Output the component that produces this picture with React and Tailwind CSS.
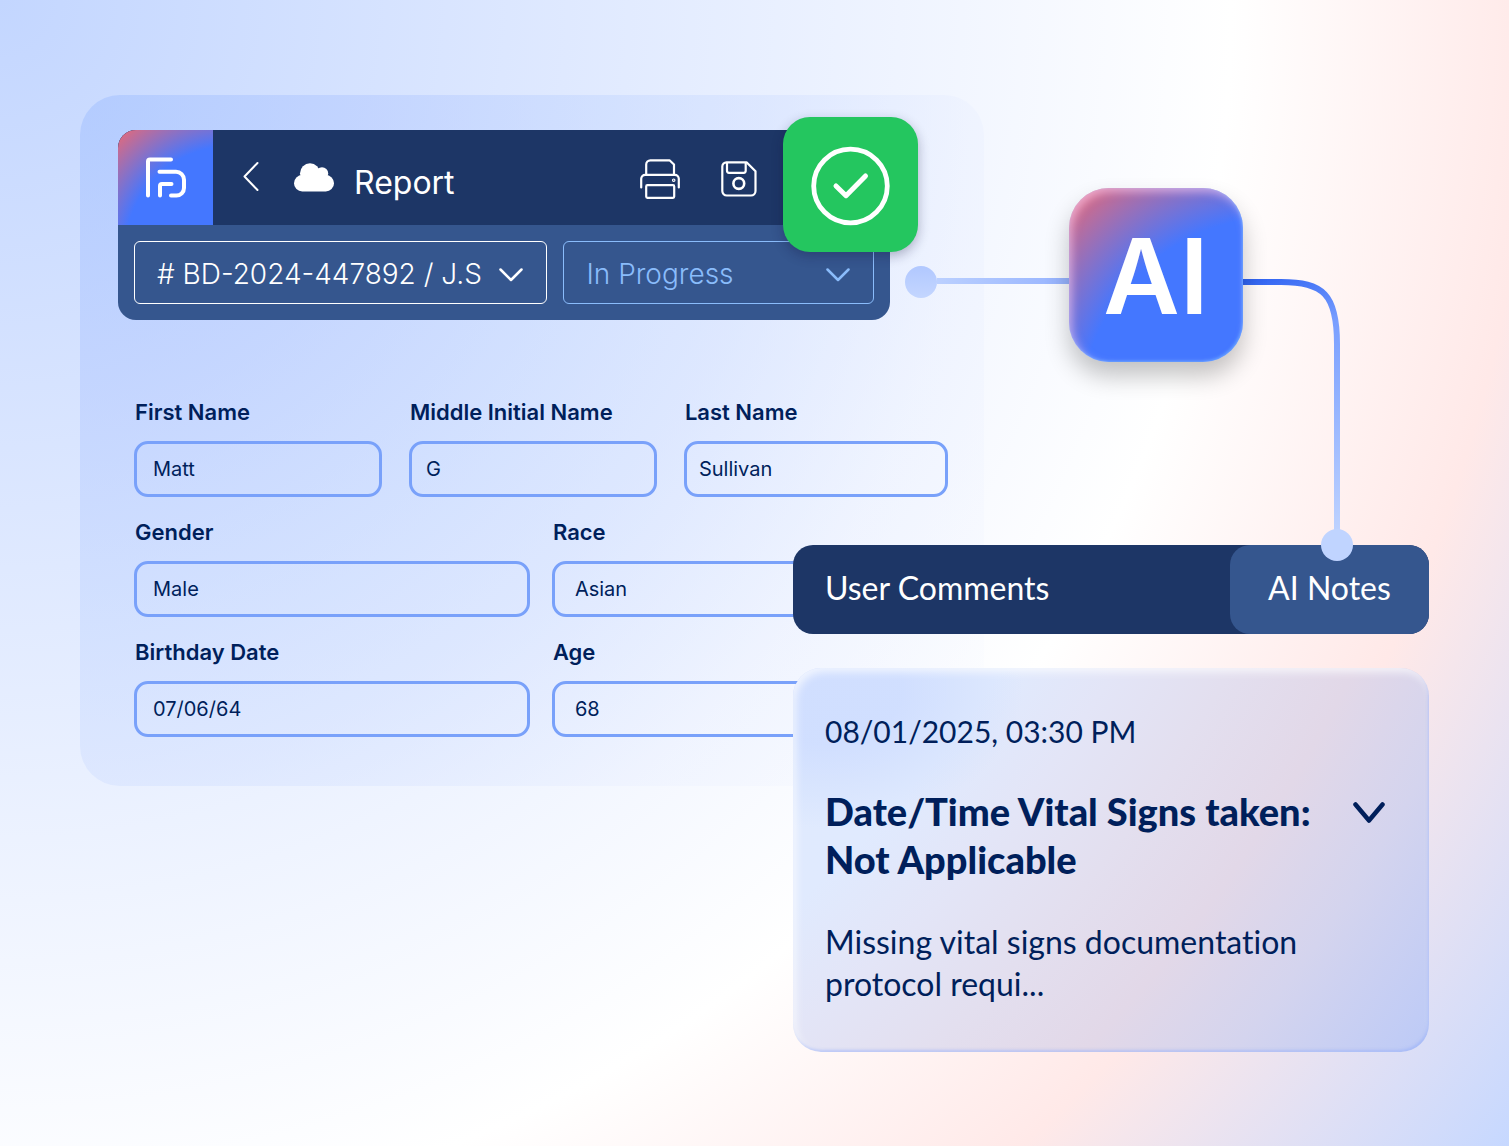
import React from "react";

function Chevron({ className, strokeWidth = 2 }) {
  return (
    <svg viewBox="0 0 24 14" fill="none" stroke="currentColor" strokeWidth={strokeWidth} strokeLinecap="round" strokeLinejoin="round" className={className} aria-hidden="true">
      <path d="M1.500 1.500 12 12 22.500 1.500" />
    </svg>
  );
}

function LogoMark() {
  return (
    <svg viewBox="0 0 95 95" fill="none" stroke="white" strokeWidth="4" strokeLinecap="round" strokeLinejoin="round" className="size-full" aria-hidden="true">
      <path d="M30 65.500V31.500a2 2 0 0 1 2-2H53" />
      <path d="M41.500 41.700H58a8 8 0 0 1 8 8V58a7.600 7.600 0 0 1-7.600 7.600H53" />
      <path d="M42 65.500V56a2 2 0 0 1 2-2H53.500" />
    </svg>
  );
}

function CloudIcon() {
  return (
    <svg viewBox="0 0 40 29" fill="white" className="h-[29px] w-10" aria-hidden="true">
      <rect x="0" y="12" width="40" height="16.500" rx="8.250" />
      <circle cx="16" cy="10.300" r="10" />
      <circle cx="28" cy="10.500" r="6.200" />
      <rect x="7" y="9" width="26" height="9" rx="3" />
    </svg>
  );
}

function PrinterIcon() {
  return (
    <svg viewBox="0 0 40 40" fill="none" stroke="white" strokeWidth="2.200" strokeLinecap="round" strokeLinejoin="round" className="size-10" aria-hidden="true">
      <path d="M6.200 15.800V5.500a4.200 4.200 0 0 1 4.200-4.200H29.500L34 5.500V15.800" />
      <path d="M1.200 28.500V19.800a4 4 0 0 1 4-4H34.800a4 4 0 0 1 4 4V28.500" />
      <rect x="6.200" y="26.200" width="28" height="12.600" rx="1.200" />
      <circle cx="33.700" cy="21.200" r="1.200" strokeWidth="1.200" />
    </svg>
  );
}

function SaveIcon() {
  return (
    <svg viewBox="0 0 36 36" fill="none" stroke="white" strokeWidth="2.200" strokeLinejoin="round" className="size-9" aria-hidden="true">
      <path d="M5.500 1.300H25.500L34.500 10.300V30a4.500 4.500 0 0 1-4.500 4.500H5.800a4.500 4.500 0 0 1-4.500-4.500V5.500a4.200 4.200 0 0 1 4.200-4.200Z" />
      <path d="M6 1.500V9.800a2 2 0 0 0 2 2H22.700a2 2 0 0 0 2-2V1.500" />
      <circle cx="17.800" cy="22.500" r="5.400" strokeWidth="2.600" />
    </svg>
  );
}

function HeaderSelect({ label, value, tone }) {
  return (
    <div className={`relative ${tone}`}>
      <select aria-label={label} defaultValue={value} className="h-[63px] w-full appearance-none rounded-md border border-current bg-transparent pt-0.5 pl-[22px] pr-12 text-[28px] font-light outline-none">
        <option>{value}</option>
      </select>
      <Chevron strokeWidth={2.5} className="pointer-events-none absolute right-6 top-[27px] h-[14px] w-6" />
    </div>
  );
}

function Field({ id, label, value, pad = "pl-4" }) {
  return (
    <div>
      <label htmlFor={id} className="block pl-px text-[22px] leading-8 font-semibold">
        {label}
      </label>
      <input id={id} defaultValue={value} className={`mt-[13px] block h-14 w-full rounded-[14px] border-[3px] border-[#79a1fa] bg-transparent text-xl outline-none ${pad}`} />
    </div>
  );
}

function ReportHeader() {
  return (
    <header className="relative mr-[94px] ml-[38px] font-[Inter,sans-serif] text-white">
      <div className="overflow-hidden rounded-[18px] bg-[#35568e]">
        <div className="flex h-[95px] items-center bg-[#1d3666]">
          <div className="size-[95px] bg-[radial-gradient(circle_at_120%_130%,#4477ff_0%,#4477ff_64%,#dc6a80_97%)]">
            <LogoMark />
          </div>
          <button aria-label="Back" className="ml-[30px] mb-1">
            <svg viewBox="0 0 16 30" fill="none" stroke="white" strokeWidth="2" strokeLinecap="round" strokeLinejoin="round" className="h-[30px] w-4" aria-hidden="true">
              <path d="M14.500 2 1.500 15.500 14.500 29" />
            </svg>
          </button>
          <div className="ml-[35px]">
            <CloudIcon />
          </div>
          <h1 className="mt-2.5 ml-5 text-[32px]">Report</h1>
          <div className="mt-0.5 mr-[133px] ml-auto flex items-center gap-[41px]">
            <button aria-label="Print"><PrinterIcon /></button>
            <button aria-label="Save"><SaveIcon /></button>
          </div>
        </div>
        <div className="grid grid-cols-[413fr_310fr] gap-4 p-4">
          <HeaderSelect label="Report number" value="# BD-2024-447892 / J.S" tone="text-white" />
          <HeaderSelect label="Status" value="In Progress" tone="text-[#8abcfb]" />
        </div>
      </div>
      <div className="absolute -top-[13px] -right-7 size-[135px] rounded-[27px] bg-[#24c65f] shadow-[0_4px_12px_rgba(20,20,60,0.3)]">
        <svg viewBox="0 0 135 135" fill="none" stroke="white" strokeLinecap="round" strokeLinejoin="round" className="size-full" aria-label="Complete">
          <circle cx="67.500" cy="69" r="36.800" strokeWidth="4.800" />
          <path d="M53 69 63 78.700 82.500 59" strokeWidth="5" />
        </svg>
      </div>
    </header>
  );
}

function ReportPanel() {
  return (
    <section className="col-start-1 row-start-1 w-[67%] self-start rounded-[40px] bg-[radial-gradient(circle_at_0_0,rgba(150,184,255,0.42)_0%,rgba(165,190,255,0.38)_25%,rgba(180,204,255,0.34)_45%,rgba(198,215,255,0.34)_60%,rgba(228,235,255,0.28)_78%,rgba(255,255,255,0.1)_100%)] pt-[35px] pb-[49px]">
      <ReportHeader />
      <form className="mt-[76px] mr-9 ml-[54px] flex flex-col gap-[19px] font-[Inter,sans-serif] text-[#001f5b]">
        <div className="grid grid-cols-[248fr_248fr_264fr] gap-[27px]">
          <Field id="first" label="First Name" value="Matt" />
          <Field id="middle" label="Middle Initial Name" value="G" pad="pl-[14px]" />
          <Field id="last" label="Last Name" value="Sullivan" pad="pl-3" />
        </div>
        <div className="grid grid-cols-2 gap-[22px]">
          <Field id="gender" label="Gender" value="Male" />
          <Field id="race" label="Race" value="Asian" pad="pl-5" />
        </div>
        <div className="grid grid-cols-2 gap-[22px]">
          <Field id="birthday" label="Birthday Date" value="07/06/64" />
          <Field id="age" label="Age" value="68" pad="pl-5" />
        </div>
      </form>
    </section>
  );
}

function AiConnector() {
  return (
    <div className="absolute top-[188px] right-[156px] left-[60%] flex items-start">
      <div className="mt-[78px] size-8 shrink-0 rounded-full bg-linear-to-b from-[#b1c8ff] to-[#c4d6ff]" />
      <div className="mt-[90px] h-[6px] grow bg-linear-to-r from-[#bbd0ff] to-[#96b3ff]" />
      <div className="z-10 flex size-[174px] shrink-0 items-center justify-center rounded-[40px] bg-[radial-gradient(circle_at_120%_130%,#4477ff_0%,#4477ff_64%,#dc6a80_96%)] font-[Inter,sans-serif] text-[105px] leading-none font-semibold text-white shadow-[0_14px_24px_rgba(0,0,0,0.24),inset_3px_4px_8px_rgba(255,215,255,0.55),inset_-1px_-1px_3px_rgba(100,170,255,0.8)]">
        AI
      </div>
      <svg viewBox="0 0 110 357" fill="none" className="h-[357px] w-[110px] shrink-0" aria-hidden="true">
        <defs>
          <linearGradient id="wire" gradientUnits="userSpaceOnUse" x1="0" y1="94" x2="100" y2="357">
            <stop offset="0" stopColor="#2f63f2" />
            <stop offset="0.250" stopColor="#7a9fff" />
            <stop offset="1" stopColor="#c3d6ff" />
          </linearGradient>
        </defs>
        <path d="M0 94H38C80 94 94 106 94 156V357" stroke="url(#wire)" strokeWidth="6" />
      </svg>
    </div>
  );
}

function NotesPanel() {
  return (
    <aside className="relative z-20 col-start-1 row-start-1 w-[636px] self-end justify-self-end font-[Lato,sans-serif] text-[#001f5b] [font-variant-ligatures:none]">
      <div className="flex rounded-[20px] bg-[#1d3666] text-[32px] text-white">
        <button className="h-[89px] grow pb-1 pl-8 text-left">User Comments</button>
        <button className="relative h-[89px] w-[199px] rounded-[20px] bg-[#35568e] pb-1">
          AI Notes
          <span className="absolute -top-4 right-[76px] size-8 rounded-full bg-[#c0d4ff]" />
        </button>
      </div>
      <article className="mt-[34px] rounded-[28px] bg-[radial-gradient(ellipse_200px_140px_at_30px_20px,rgba(205,220,255,0.8)_40%,rgba(205,220,255,0)_100%),radial-gradient(circle_at_-793px_-668px,#dfeafe_1037px,#e0eafe_1204px,#e3e5f7_1300px,#e3dfef_1400px,#e2d8e8_1510px,#d4d4ee_1620px,#bccaf7_1774px)] px-8 pt-[43px] pb-[47px] shadow-[inset_3px_4px_8px_rgba(255,255,255,0.7),inset_-1px_-2px_3px_rgba(130,160,250,0.5)]">
        <time className="block text-[30px] leading-10">08/01/2025, 03:30 PM</time>
        <div className="mt-9 flex items-start justify-between">
          <h2 className="text-[38px] leading-12 font-black">
            Date/Time Vital Signs taken:
            <br />
            Not Applicable
          </h2>
          <button aria-label="Expand note" className="mt-[15px] mr-3">
            <svg viewBox="0 0 32 22" fill="none" stroke="currentColor" strokeWidth="4.500" strokeLinecap="round" strokeLinejoin="round" className="h-[22px] w-8" aria-hidden="true">
              <path d="M2.500 2.500 16 18.500 29.500 2.500" />
            </svg>
          </button>
        </div>
        <p className="mt-[38px] text-[32px] leading-[42px]">
          Missing vital signs documentation
          <br />
          protocol requi...
        </p>
      </article>
    </aside>
  );
}

export default function App() {
  return (
    <main className="relative grid min-h-screen bg-[radial-gradient(circle_at_0_0,#c3d6ff_0%,#dfe9ff_30%,#ffffff_65%,#ffe9e8_81%,#c6d8ff_100%)] px-20 pt-[95px] pb-[94px]">
      <ReportPanel />
      <AiConnector />
      <NotesPanel />
    </main>
  );
}
